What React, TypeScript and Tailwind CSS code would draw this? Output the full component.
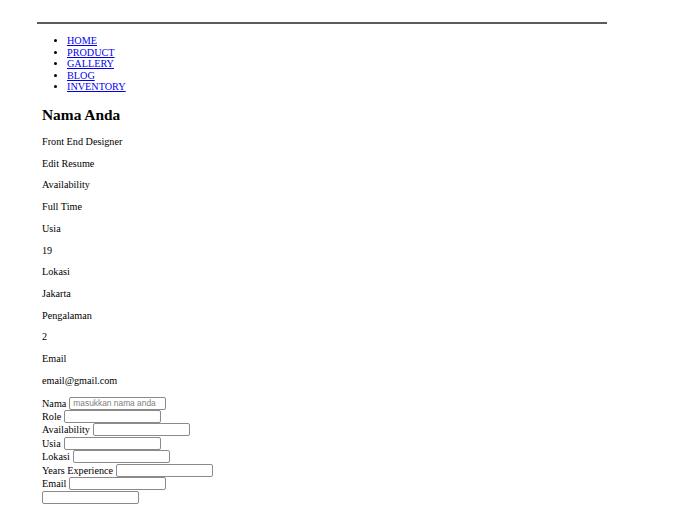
const links = ['HOME', 'PRODUCT', 'GALLERY', 'BLOG', 'INVENTORY'];

const info = [
  'Front End Designer',
  'Edit Resume',
  'Availability',
  'Full Time',
  'Usia',
  '19',
  'Lokasi',
  'Jakarta',
  'Pengalaman',
  '2',
  'Email',
  'email@gmail.com',
];

const fields = ['Nama', 'Role', 'Availability', 'Usia', 'Lokasi', 'Years Experience', 'Email', ''];

function Field({ label, placeholder }: { label: string; placeholder?: string }) {
  return (
    <div className="flex items-center gap-[3px] h-[13.43px]">
      {label && <label>{label}</label>}
      <input
        type="text"
        placeholder={placeholder}
        className="h-[13px] w-[97px] rounded-[2px] border border-[#8a8a8a] bg-white px-[3px] font-['Liberation_Sans',sans-serif] text-[8.4px] placeholder:text-[#808080] outline-none"
      />
    </div>
  );
}

export default function App() {
  return (
    <div className="min-h-[517px] bg-white font-['Liberation_Serif',serif] text-[10.2px] text-black">
      <div className="pt-[22px] pl-[37px]">
        <div className="h-[2px] w-[570px] bg-[#5c5c5c]" />
      </div>

      <div className="pl-[42px]">
        <ul className="mt-[11px] list-disc pl-[25px] leading-[11.5px]">
          {links.map((l) => (
            <li key={l}>
              <a href="#" className="text-[#0000ee] underline">{l}</a>
            </li>
          ))}
        </ul>

        <h2 className="mt-[13px] text-[15.4px] font-bold leading-[17px]">Nama Anda</h2>

        <div className="mt-[13.5px] leading-[11.7px]">
          {info.map((t, i) => (
            <p key={i} className="mb-[10px]">{t}</p>
          ))}
        </div>

        <form>
          {fields.map((f, i) => (
            <Field key={i} label={f} placeholder={i === 0 ? 'masukkan nama anda' : undefined} />
          ))}
        </form>
      </div>
    </div>
  );
}
